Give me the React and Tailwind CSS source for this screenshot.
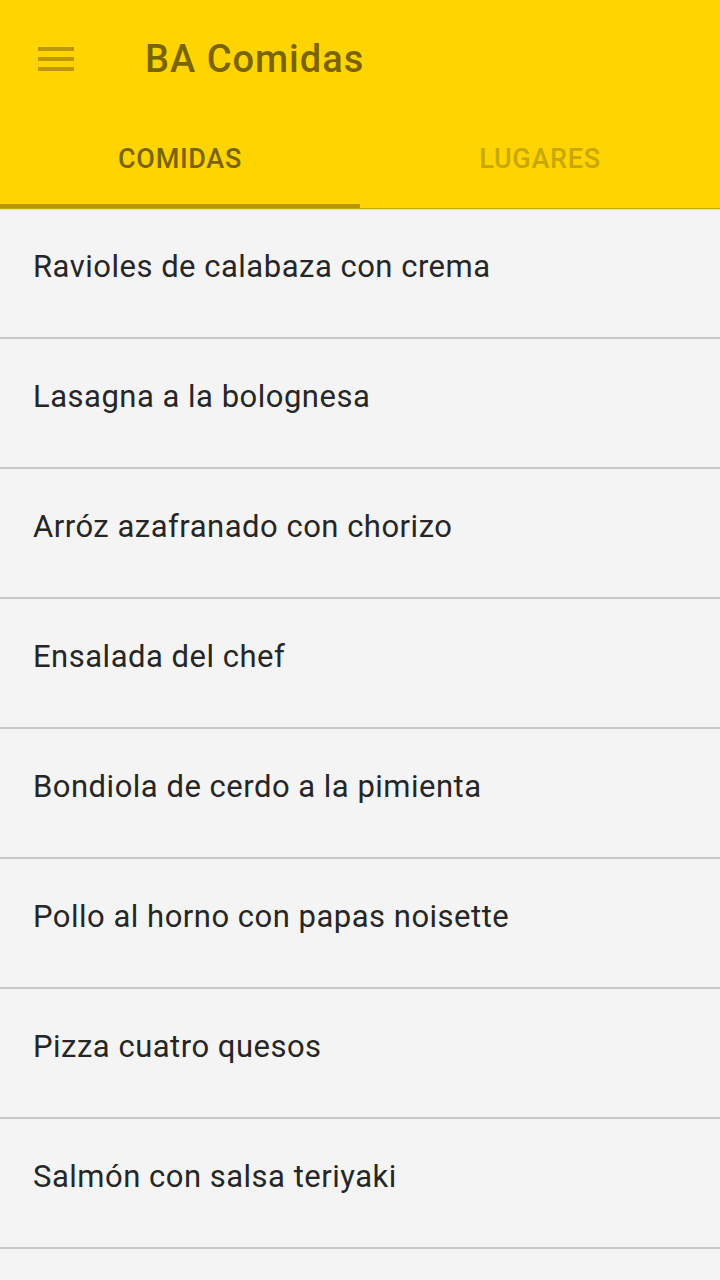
import React, { useState } from 'react';

const comidas = [
  'Ravioles de calabaza con crema',
  'Lasagna a la bolognesa',
  'Arróz azafranado con chorizo',
  'Ensalada del chef',
  'Bondiola de cerdo a la pimienta',
  'Pollo al horno con papas noisette',
  'Pizza cuatro quesos',
  'Salmón con salsa teriyaki',
];

const App = () => {
  const [tab, setTab] = useState(0);

  return (
    <div className="w-[720px] h-[1280px] overflow-hidden bg-[#f4f4f4] font-['Roboto',sans-serif]">
      <header className="bg-[#ffd400] shadow-[0_1px_1px_rgba(0,0,0,0.08)]">
        <div className="h-[117px] flex items-center">
          <button className="ml-[38px] flex flex-col gap-[6px] w-[36px]">
            <span className="h-[4px] w-full bg-[#bc9700]"></span>
            <span className="h-[4px] w-full bg-[#bc9700]"></span>
            <span className="h-[4px] w-full bg-[#bc9700]"></span>
          </button>
          <h1 className="ml-[71px] text-[38px] font-medium tracking-[1px] text-[#7a6400] leading-none">BA Comidas</h1>
        </div>
        <div className="flex h-[91px]">
          {['COMIDAS', 'LUGARES'].map((label, i) => (
            <button
              key={label}
              onClick={() => setTab(i)}
              className={`flex-1 flex flex-col ${i === tab ? 'text-[#7a6400]' : 'text-[#c9a800]'}`}
            >
              <span className="flex-1 flex items-center justify-center text-[27px] font-medium tracking-[0.7px] pb-[2px]">
                {label}
              </span>
              <span className={`h-[4px] w-full ${i === tab ? 'bg-[#b89700]' : 'bg-transparent'}`}></span>
            </button>
          ))}
        </div>
        <div className="h-[1px] bg-[#c9a800]"></div>
      </header>
      <ul>
        {comidas.map((c) => (
          <li key={c} className="h-[130px] border-b-2 border-[#c8c8c8] flex items-center pl-[33px] pb-[12px]">
            <span className="text-[31px] tracking-[0.5px] text-[#262626]">{c}</span>
          </li>
        ))}
      </ul>
    </div>
  );
};

export default App;
